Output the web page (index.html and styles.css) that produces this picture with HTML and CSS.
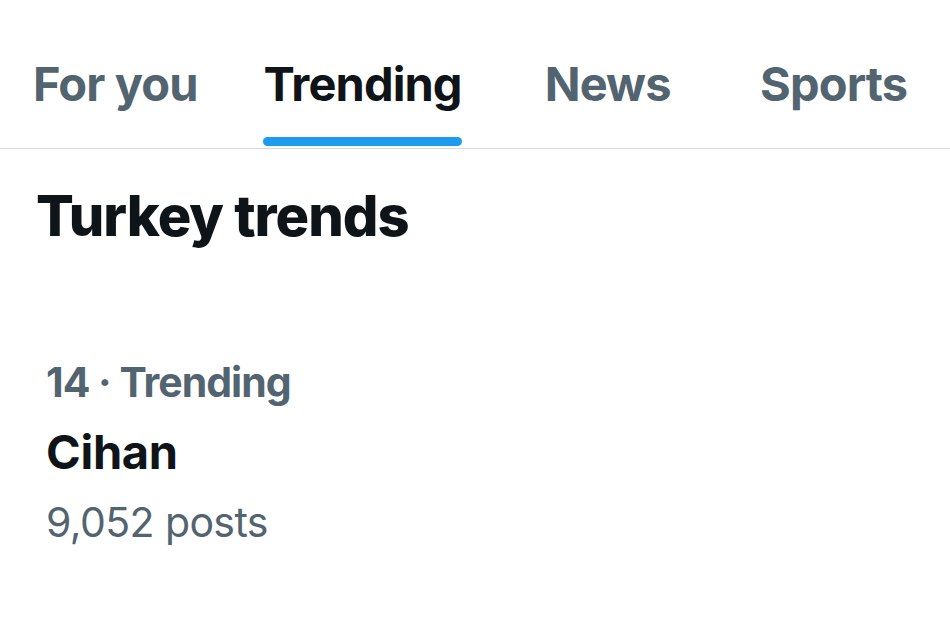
FILE: index.html
```html
<!DOCTYPE html>
<html lang="en">
<head>
<meta charset="utf-8">
<title>Explore</title>
<link rel="stylesheet" href="styles.css">
</head>
<body>
<nav class="tabs">
  <div class="tab"><span class="tab-label">For you</span></div>
  <div class="tab tab-active"><span class="tab-label">Trending</span><span class="indicator"></span></div>
  <div class="tab"><span class="tab-label">News</span></div>
  <div class="tab"><span class="tab-label">Sports</span></div>
</nav>
<main class="content">
  <h1 class="section-title">Turkey trends</h1>
  <div class="trend">
    <div class="trend-meta">14 · Trending</div>
    <div class="trend-name">Cihan</div>
    <div class="trend-count">9,052 posts</div>
  </div>
</main>
</body>
</html>
```

FILE: styles.css
```css
* { box-sizing: border-box; }
html, body {
  margin: 0;
  padding: 0;
  background: #ffffff;
  font-family: Inter, "Liberation Sans", sans-serif;
  color: #0f1419;
}
.tabs {
  display: flex;
  height: 149px;
  border-bottom: 1.5px solid #d6dde1;
  padding-top: 44px;
  overflow: hidden;
}
.tab {
  position: relative;
  flex: 0 0 auto;
  min-width: 226px;
  padding: 0 33px;
  display: flex;
  justify-content: center;
  align-items: flex-start;
  white-space: nowrap;
}
.tab-label {
  font-size: 47px;
  font-weight: 700;
  color: #536471;
  letter-spacing: -0.9px;
  line-height: 80px;
}
.tab-active .tab-label { color: #0f1419; }
.indicator {
  position: absolute;
  left: 32px;
  right: 33px;
  bottom: 2px;
  height: 9px;
  border-radius: 5px;
  background: #1d9bf0;
}
.content { padding: 0 36px; }
.section-title {
  margin: 0;
  padding-top: 32px;
  font-size: 56px;
  font-weight: 800;
  letter-spacing: -1px;
  line-height: 70px;
  color: #0f1419;
}
.trend { padding: 97px 10px 0; }
.trend-meta {
  font-size: 41px;
  font-weight: 700;
  color: #536471;
  line-height: 68px;
  letter-spacing: -1px;
}
.trend-name {
  font-size: 47px;
  font-weight: 700;
  color: #0f1419;
  line-height: 71px;
  letter-spacing: -0.3px;
}
.trend-count {
  font-size: 41px;
  font-weight: 400;
  color: #536471;
  line-height: 70px;
  letter-spacing: -0.6px;
}
```
